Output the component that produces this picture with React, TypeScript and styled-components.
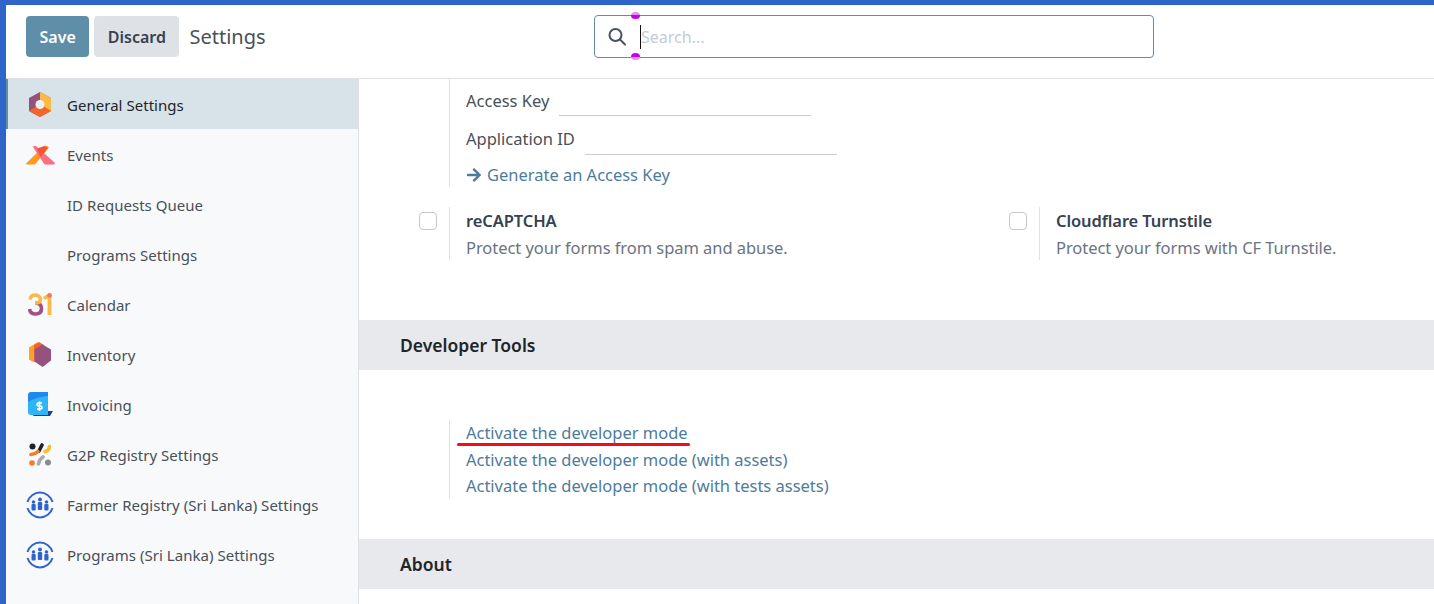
import React from 'react';
import styled, { createGlobalStyle } from 'styled-components';
import { FaArrowRight } from 'react-icons/fa';

const GlobalStyle = createGlobalStyle`
   html, body {
      margin: 0;
      height: 100%;
      overflow: hidden;
      background: #fff;
   }
   body {
      font-family: 'Noto Sans', 'Open Sans', sans-serif;
      font-size: 15px;
      color: #495057;
   }
`;

const Page = styled.div`
   width: 1434px;
   height: 604px;
   box-sizing: border-box;
   border-top: 5px solid #2f65c9;
   border-left: 6px solid #2f65c9;
   display: flex;
   flex-direction: column;
   overflow: hidden;
`;

const ControlPanel = styled.header`
   height: 74px;
   flex: none;
   box-sizing: border-box;
   border-bottom: 1px solid #dee2e6;
   display: grid;
   grid-template-columns: 568px 560px;
   align-items: center;
   padding: 0 0 10px 20px;
`;

const Actions = styled.div`
   display: flex;
   align-items: center;
   gap: 5px;
`;

const Button = styled.button<{ $primary?: boolean }>`
   height: 41px;
   padding: 0 13.5px;
   border: 0;
   border-radius: 4px;
   font: 600 16px 'Noto Sans', sans-serif;
   color: ${({ $primary }) => ($primary ? '#fff' : '#374151')};
   background: ${({ $primary }) => ($primary ? '#5f8ea9' : '#dee1e6')};
`;

const Title = styled.span`
   font-size: 20px;
   color: #495057;
   margin-left: 5px;
`;

const SearchBox = styled.div`
   position: relative;
   height: 43px;
   box-sizing: border-box;
   border: 1px solid #5f8ea9;
   border-radius: 4px;
   display: flex;
   align-items: center;
   padding-left: 12px;
   svg {
      flex: none;
      color: #46525f;
   }
`;

const Caret = styled.span`
   width: 1px;
   height: 24px;
   background: #111;
   margin-left: 13px;
`;

const Placeholder = styled.span`
   font-size: 16px;
   color: #c3ccd6;
`;

const Handle = styled.span<{ $bottom?: boolean }>`
   position: absolute;
   left: 36px;
   width: 9px;
   height: 7px;
   border-radius: 50%;
   background: linear-gradient(
      ${({ $bottom }) => ($bottom ? 'to top' : 'to bottom')},
      #e48cf6 45%,
      #c400e6 45%
   );
   ${({ $bottom }) => ($bottom ? 'bottom: -2.5px;' : 'top: -4px;')}
`;

const Body = styled.div`
   flex: 1;
   display: flex;
   min-height: 0;
`;

const Sidebar = styled.nav`
   width: 353px;
   flex: none;
   box-sizing: border-box;
   background: #f8f9fb;
   border-right: 1px solid #dee2e6;
`;

const SidebarItem = styled.div<{ $active?: boolean }>`
   height: 50px;
   box-sizing: border-box;
   padding-top: 1px;
   display: flex;
   align-items: center;
   font-size: 15px;
   letter-spacing: 0.03px;
   color: ${({ $active }) => ($active ? '#212529' : '#495057')};
   background: ${({ $active }) => ($active ? '#d8e2e9' : 'transparent')};
   border-left: 2px solid ${({ $active }) => ($active ? '#5f8ea9' : 'transparent')};
`;

const IconSlot = styled.span`
   width: 59px;
   flex: none;
   display: flex;
   justify-content: center;
   padding-left: 5px;
   box-sizing: border-box;
`;

const Content = styled.main`
   flex: 1;
   min-width: 0;
   overflow: hidden;
`;

const TopBlock = styled.div`
   height: 241px;
   padding-left: 90px;
`;

const Fields = styled.div`
   width: max-content;
   border-left: 1px solid #dee2e6;
   padding-left: 16px;
   height: 108px;
   box-sizing: border-box;
   display: flex;
   flex-direction: column;
`;

const FieldRow = styled.div`
   display: flex;
   flex: none;
   align-items: flex-end;
   height: 38px;
   box-sizing: border-box;
   padding-bottom: 5px;
   font-size: 16.5px;
   line-height: 22px;
`;

const FieldLine = styled.span<{ $drop: number }>`
   width: 252px;
   height: 1px;
   background: #cccccc;
   margin-left: 10px;
   margin-bottom: ${({ $drop }) => -$drop}px;
`;

const ActionLink = styled.a`
   display: block;
   color: #4d7c9b;
   font-size: 16.5px;
   line-height: 26.5px;
   letter-spacing: -0.02px;
`;

const KeyLink = styled(ActionLink)`
   display: flex;
   flex: none;
   align-items: center;
   gap: 5px;
   margin-top: 7px;
   line-height: 26px;
   svg {
      flex: none;
   }
`;

const Options = styled.div`
   display: grid;
   grid-template-columns: 590px 1fr;
   margin: 20px 0 0 -31px;
`;

const Option = styled.div`
   display: flex;
`;

const CheckBox = styled.span`
   width: 16px;
   height: 16px;
   flex: none;
   margin: 5px 12px 0 1px;
   border: 1px solid #c3c8cf;
   border-radius: 4px;
   background: #fff;
`;

const OptionText = styled.div`
   border-left: 1px solid #dee2e6;
   padding-left: 16px;
   height: 53px;
   box-sizing: border-box;
`;

const OptionTitle = styled.div`
   font-weight: 600;
   font-size: 16.5px;
   line-height: 27px;
   letter-spacing: -0.1px;
   color: #374151;
`;

const OptionHelp = styled.div`
   font-size: 16.5px;
   line-height: 28px;
   color: #6b7480;
   letter-spacing: -0.05px;
`;

const SectionBar = styled.h2`
   margin: 0;
   height: 50px;
   line-height: 51px;
   padding-left: 41px;
   background: #e7e9ed;
   font-size: 17.5px;
   font-weight: 600;
   color: #212529;
`;

const ToolsBlock = styled.div`
   height: 169px;
   box-sizing: border-box;
   padding: 50px 0 0 90px;
`;

const ToolLinks = styled.div`
   width: max-content;
   position: relative;
   border-left: 1px solid #dee2e6;
   padding-left: 16px;
   height: 79px;
`;

const RedMark = styled.span`
   position: absolute;
   left: 7px;
   top: 23px;
   width: 233px;
   height: 3px;
   border-radius: 2px;
   background: #f40b1c;
`;

const AppIcon = ({ kind }: { kind: string }) => {
   switch (kind) {
      case 'general':
         return (
            <svg width='24' height='25' viewBox='0 0 24 25'>
               <path d='M12 0 1 6v13l11 6 11-6V6z' fill='#96527f' />
               <path d='M12 0 23 6v13l-4 2-7-9z' fill='#fbb945' />
               <path d='M1 19l11-7 11 7-11 6z' fill='#f4652a' />
               <circle cx='12' cy='12.5' r='4.5' fill='#eef1f4' />
            </svg>
         );
      case 'events':
         return (
            <svg width='29' height='20' viewBox='0 0 29 20'>
               <path d='M18 1q1.500-1 3 0l2 1.500L9 19.500H1q-1.500-.5-.500-1.500z' fill='#fd9a1f' />
               <path d='M7 2q1.500-2 3.500-.5L28.500 17.500q.8 2-.5 2H18.500z' fill='#fc6f80' />
               <path d='M11 3.500 18.500 1 22 3l-7.500 9z' fill='#f2553a' />
            </svg>
         );
      case 'calendar':
         return (
            <svg width='25' height='23' viewBox='0 0 25 23'>
               <path
                  d='M7 10c3 0 6.500 1 6.500 5.500 0 4.500-3.500 5.500-6 5.500S2 20 1.500 16'
                  fill='none'
                  stroke='#a64f86'
                  strokeWidth='3.600'
               />
               <path
                  d='M2.200 6.500C2.500 3.500 4.500 2 7 2s5.500 1.500 5.500 4.500S10 10 7 10'
                  fill='none'
                  stroke='#fbb945'
                  strokeWidth='3.600'
               />
               <path d='M16 5.500 21.500 2v20' fill='none' stroke='#fbb945' strokeWidth='3.800' />
               <circle cx='21.500' cy='2.500' r='2.300' fill='#f3736f' />
            </svg>
         );
      case 'inventory':
         return (
            <svg width='22' height='25' viewBox='0 0 22 25'>
               <path d='M9 0 0 5.500v12l5 3z' fill='#fca12b' />
               <path d='M10 0 5 3v16l2 1 8-17z' fill='#f4652a' />
               <path d='M13.500 2.500 22 7.500v11L13.500 25 5.500 19.500V7.500z' fill='#96527f' />
            </svg>
         );
      case 'invoicing':
         return (
            <svg width='25' height='25' viewBox='0 0 25 25'>
               <path d='M8 19h17l-3 5H5z' fill='#17408f' />
               <path d='M3 0h17v23H4q-4 0-4-4V3q0-3 3-3z' fill='#1e88ee' />
               <path d='M0 10q8-5 20-6v19H4q-4 0-4-4z' fill='#2fb4f5' />
               <path
                  d='M14 11h-3.500q-1.500 0-1.500 1.500t1.500 1.500h2q1.500 0 1.500 1.500t-1.500 1.500H9M11.500 9.500v9.500'
                  fill='none'
                  stroke='#fff'
                  strokeWidth='1.700'
               />
            </svg>
         );
      case 'registry':
         return (
            <svg width='22' height='23' viewBox='0 0 22 23'>
               <circle cx='3.500' cy='3.500' r='3' fill='#1f2227' />
               <path d='M13 2 10 8' stroke='#1f2227' strokeWidth='3.600' strokeLinecap='round' />
               <path d='M16 8.500q4-.5 4.500-5' fill='none' stroke='#f9bf26' strokeWidth='3.600' strokeLinecap='round' />
               <path d='M2 11.500q4.500-.5 7-3' fill='none' stroke='#f47b2a' strokeWidth='3.600' strokeLinecap='round' />
               <circle cx='3' cy='20' r='2.800' fill='#f47b2a' />
               <path d='M9.500 21q1-5 4.500-7' fill='none' stroke='#a9aaab' strokeWidth='3.600' strokeLinecap='round' />
               <circle cx='19' cy='19.500' r='3' fill='#8b8c8e' />
            </svg>
         );
      default:
         return (
            <svg width='28' height='28' viewBox='0 0 28 28' fill='#2f65c9'>
               <path
                  d='M1.500 11A13 13 0 0 1 26.500 11M26.500 17A13 13 0 0 1 1.500 17'
                  fill='none'
                  stroke='#2f65c9'
                  strokeWidth='2'
               />
               <circle cx='14' cy='8.500' r='2' />
               <rect x='11.800' y='11' width='4.400' height='8' rx='1' />
               <circle cx='7.500' cy='11' r='1.800' />
               <rect x='5.500' y='13' width='4.200' height='6.500' rx='1' />
               <circle cx='20.500' cy='11' r='1.800' />
               <rect x='18.300' y='13' width='4.200' height='6.500' rx='1' />
            </svg>
         );
   }
};

const menu = [
   { label: 'General Settings', icon: 'general', active: true },
   { label: 'Events', icon: 'events' },
   { label: 'ID Requests Queue' },
   { label: 'Programs Settings' },
   { label: 'Calendar', icon: 'calendar' },
   { label: 'Inventory', icon: 'inventory' },
   { label: 'Invoicing', icon: 'invoicing' },
   { label: 'G2P Registry Settings', icon: 'registry' },
   { label: 'Farmer Registry (Sri Lanka) Settings', icon: 'people' },
   { label: 'Programs (Sri Lanka) Settings', icon: 'people' },
];

export default function App() {
   return (
      <Page>
         <GlobalStyle />
         <ControlPanel>
            <Actions>
               <Button $primary>Save</Button>
               <Button>Discard</Button>
               <Title>Settings</Title>
            </Actions>
            <SearchBox>
               <Handle />
               <svg width='20' height='20' viewBox='0 0 20 20' fill='none' stroke='currentColor' strokeWidth='2'>
                  <circle cx='8.500' cy='8' r='6' />
                  <path d='m13 12.500 5 5' strokeLinecap='round' />
               </svg>
               <Caret />
               <Placeholder>Search...</Placeholder>
               <Handle $bottom />
            </SearchBox>
         </ControlPanel>
         <Body>
            <Sidebar>
               {menu.map((item) => (
                  <SidebarItem key={item.label} $active={item.active}>
                     <IconSlot>{item.icon && <AppIcon kind={item.icon} />}</IconSlot>
                     {item.label}
                  </SidebarItem>
               ))}
            </Sidebar>
            <Content>
               <TopBlock>
                  <Fields>
                     <FieldRow>
                        Access Key
                        <FieldLine $drop={4} />
                     </FieldRow>
                     <FieldRow>
                        Application ID
                        <FieldLine $drop={5} />
                     </FieldRow>
                     <KeyLink>
                        <FaArrowRight size={16} />
                        Generate an Access Key
                     </KeyLink>
                  </Fields>
                  <Options>
                     <Option>
                        <CheckBox />
                        <OptionText>
                           <OptionTitle>reCAPTCHA</OptionTitle>
                           <OptionHelp>Protect your forms from spam and abuse.</OptionHelp>
                        </OptionText>
                     </Option>
                     <Option>
                        <CheckBox />
                        <OptionText>
                           <OptionTitle>Cloudflare Turnstile</OptionTitle>
                           <OptionHelp>Protect your forms with CF Turnstile.</OptionHelp>
                        </OptionText>
                     </Option>
                  </Options>
               </TopBlock>
               <SectionBar>Developer Tools</SectionBar>
               <ToolsBlock>
                  <ToolLinks>
                     <ActionLink>Activate the developer mode</ActionLink>
                     <ActionLink>Activate the developer mode (with assets)</ActionLink>
                     <ActionLink>Activate the developer mode (with tests assets)</ActionLink>
                     <RedMark />
                  </ToolLinks>
               </ToolsBlock>
               <SectionBar>About</SectionBar>
            </Content>
         </Body>
      </Page>
   );
}
